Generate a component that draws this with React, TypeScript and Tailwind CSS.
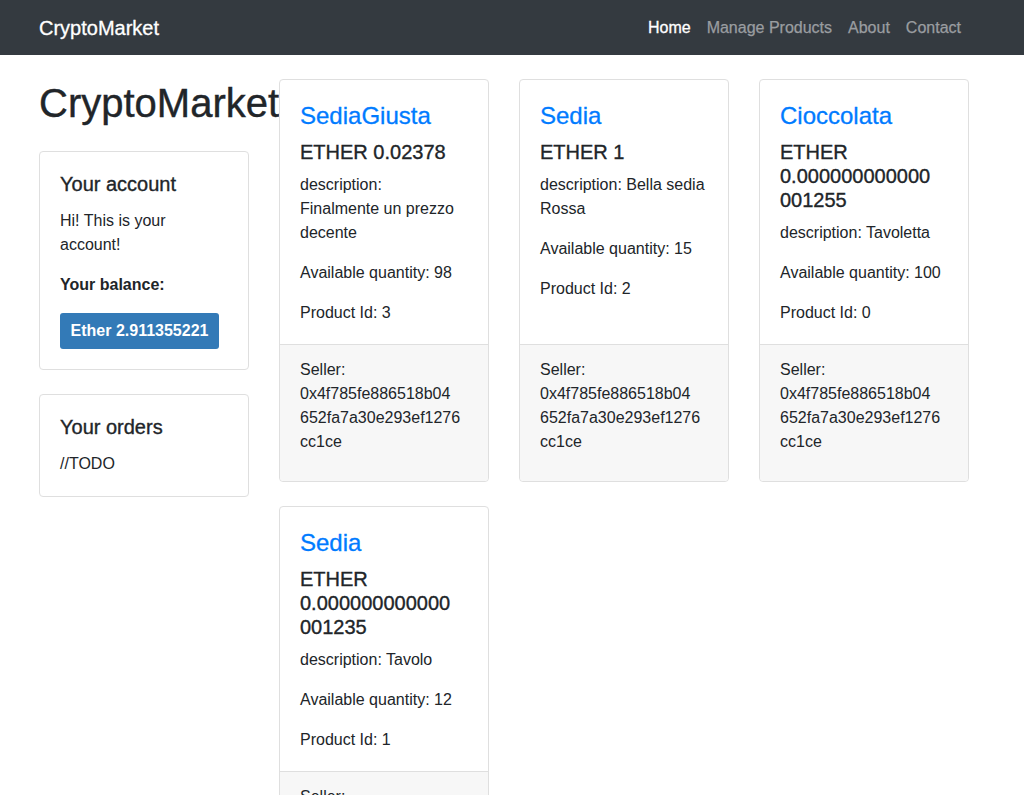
import React from "react";

type Product = {
  name: React.ReactNode;
  price: React.ReactNode;
  desc: React.ReactNode;
  qty: number;
  id: number;
};

const products: Product[] = [
  {
    name: "SediaGiusta",
    price: <>ETHER 0.02378</>,
    desc: (
      <>
        description:
        <br />
        Finalmente un prezzo
        <br />
        decente
      </>
    ),
    qty: 98,
    id: 3,
  },
  {
    name: "Sedia",
    price: <>ETHER 1</>,
    desc: (
      <>
        description: Bella sedia
        <br />
        Rossa
      </>
    ),
    qty: 15,
    id: 2,
  },
  {
    name: "Cioccolata",
    price: (
      <>
        ETHER
        <br />
        0.000000000000
        <br />
        001255
      </>
    ),
    desc: <>description: Tavoletta</>,
    qty: 100,
    id: 0,
  },
  {
    name: "Sedia",
    price: (
      <>
        ETHER
        <br />
        0.000000000000
        <br />
        001235
      </>
    ),
    desc: <>description: Tavolo</>,
    qty: 12,
    id: 1,
  },
];

function ProductCard({ p }: { p: Product }) {
  return (
    <div className="flex flex-col rounded-[4px] border border-[#dfdfdf] bg-white">
      <div className="flex-1 px-5 pt-5 pb-[19px]">
        <h4 className="mb-3 pt-[2px] text-[24px] leading-[1.2] font-medium text-[#007bff] [-webkit-text-stroke:0.3px_#007bff]">
          {p.name}
        </h4>
        <h5 className="mb-2 -mt-[3px] text-[20px] leading-[1.2] font-medium text-[#212529] [-webkit-text-stroke:0.35px_#212529]">
          {p.price}
        </h5>
        <p className="mb-4 pt-[1px]">{p.desc}</p>
        <p className="mb-4">Available quantity: {p.qty}</p>
        <p>Product Id: {p.id}</p>
      </div>
      <div className="rounded-b-[4px] border-t border-[#dfdfdf] bg-[#f7f7f7] px-5 pt-[13px] pb-3">
        <p className="mb-[15px]">
          Seller:
          <br />
          0x4f785fe886518b04
          <br />
          652fa7a30e293ef1276
          <br />
          cc1ce
        </p>
      </div>
    </div>
  );
}

export default function App() {
  return (
    <div
      className="min-h-screen bg-white text-[16px] leading-6 text-[#212529]"
      style={{ fontFamily: '"Liberation Sans", Arial, sans-serif' }}
    >
      <nav className="flex h-[55px] items-center justify-between bg-[#343a40] pl-[39px] pr-[55px]">
        <a className="text-[20px] leading-[30px] text-white [-webkit-text-stroke:0.3px_white]">CryptoMarket</a>
        <ul className="flex items-center">
          <li>
            <a className="block px-2 leading-6 text-white [-webkit-text-stroke:0.3px_white]">Home</a>
          </li>
          <li>
            <a className="block px-2 leading-6 text-[#9a9da0] [-webkit-text-stroke:0.25px_#9a9da0]">Manage Products</a>
          </li>
          <li>
            <a className="block px-2 leading-6 text-[#9a9da0] [-webkit-text-stroke:0.25px_#9a9da0]">About</a>
          </li>
          <li>
            <a className="block px-2 leading-6 text-[#9a9da0] [-webkit-text-stroke:0.25px_#9a9da0]">Contact</a>
          </li>
        </ul>
      </nav>

      <div className="flex gap-[30px] pl-[39px] pt-[24px]">
        <div className="w-[210px] shrink-0">
          <h1 className="mb-2 whitespace-nowrap text-[40px] leading-[48px] font-medium [-webkit-text-stroke:0.4px_#212529]">
            CryptoMarket
          </h1>
          <div className="mt-6 mb-6 rounded-[4px] border border-[#dfdfdf] bg-white p-5">
            <h5 className="mb-3 text-[20px] leading-[25px] font-medium [-webkit-text-stroke:0.35px_#212529]">Your account</h5>
            <p className="mb-4">
              Hi! This is your
              <br />
              account!
            </p>
            <p className="mb-4 font-bold">Your balance:</p>
            <button className="h-[36px] w-[159px] rounded-[3px] bg-[#337ab7] text-center text-[16px] font-bold text-white">
              Ether 2.911355221
            </button>
          </div>
          <div className="rounded-[4px] border border-[#dfdfdf] bg-white p-5">
            <h5 className="mb-3 text-[20px] leading-[25px] font-medium [-webkit-text-stroke:0.35px_#212529]">Your orders</h5>
            <p>//TODO</p>
          </div>
        </div>

        <div className="grid grid-cols-[210px_210px_210px] items-stretch gap-x-[30px] gap-y-[24px]">
          {products.map((p, i) => (
            <ProductCard key={i} p={p} />
          ))}
        </div>
      </div>
    </div>
  );
}
